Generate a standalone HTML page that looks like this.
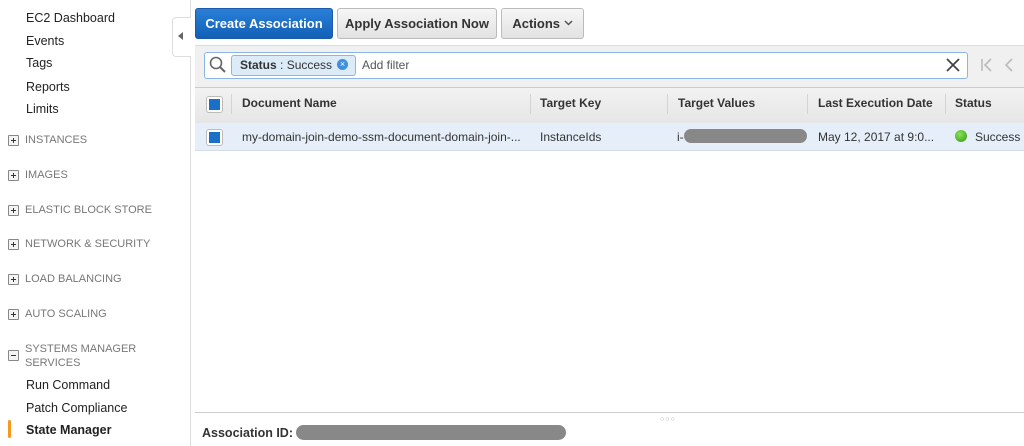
<!DOCTYPE html><html><head><style>
body{margin:0;width:1024px;height:446px;overflow:hidden;background:#fff;font-family:"Liberation Sans",sans-serif;position:relative;font-size:12px;color:#333}
.a{position:absolute;white-space:nowrap}
.nav{left:26px;font-size:12.5px;color:#222}
.sec{left:25px;font-size:11px;color:#777}
.pl{position:absolute;left:8px;width:9px;height:9px;border:1px solid #888;border-radius:1px;background:#f4f4f4}
.pl:before{content:"";position:absolute;left:2px;top:4px;width:5px;height:1px;background:#333}
.pl.p:after{content:"";position:absolute;left:4px;top:2px;width:1px;height:5px;background:#333}
.btn{position:absolute;top:8px;height:29px;border:1px solid #bbb;border-radius:3px;background:linear-gradient(#f6f6f6,#e2e2e2);font-weight:bold;font-size:13px;color:#333;line-height:29px;text-align:center}
.hd{position:absolute;top:87px;height:35px;line-height:33px;font-weight:bold;font-size:12px;color:#333}
.sep{position:absolute;top:94px;width:1px;height:20px;background:#d4d4d4}
.cb{position:absolute;width:11px;height:11px;background:#1a6fc9;border:2px solid #fff;box-shadow:0 0 0 1px #bbb;border-radius:2px}
.blur{position:absolute;background:#888;border-radius:8px}
</style></head><body>
<div class="a" style="left:190px;top:0;width:1px;height:446px;background:#ddd"></div>
<div class="a" style="left:172px;top:17px;width:18px;height:38px;border:1px solid #ddd;border-right:none;border-radius:4px 0 0 4px;background:#fff"></div>
<div class="a" style="left:178px;top:32px;width:0;height:0;border-top:4px solid transparent;border-bottom:4px solid transparent;border-right:5px solid #666"></div>
<div class="a nav" style="top:11px">EC2 Dashboard</div>
<div class="a nav" style="top:34px">Events</div>
<div class="a nav" style="top:56px">Tags</div>
<div class="a nav" style="top:80px">Reports</div>
<div class="a nav" style="top:102px">Limits</div>
<div class="pl p" style="top:135px"></div><div class="a sec" style="top:134px">INSTANCES</div>
<div class="pl p" style="top:170px"></div><div class="a sec" style="top:169px">IMAGES</div>
<div class="pl p" style="top:205px"></div><div class="a sec" style="top:204px">ELASTIC BLOCK STORE</div>
<div class="pl p" style="top:239px"></div><div class="a sec" style="top:238px">NETWORK &amp; SECURITY</div>
<div class="pl p" style="top:274px"></div><div class="a sec" style="top:273px">LOAD BALANCING</div>
<div class="pl p" style="top:309px"></div><div class="a sec" style="top:308px">AUTO SCALING</div>
<div class="pl" style="top:350px"></div><div class="a sec" style="top:342px;line-height:14px">SYSTEMS MANAGER<br>SERVICES</div>
<div class="a nav" style="top:378px">Run Command</div>
<div class="a nav" style="top:401px">Patch Compliance</div>
<div class="a" style="left:8px;top:420px;width:3px;height:18px;background:#f7981d;border-radius:2px"></div>
<div class="a nav" style="top:423px;font-weight:bold">State Manager</div>

<div class="btn" style="left:195px;width:136px;background:linear-gradient(#2a7fd6,#1260b8);border-color:#1a5aa8;color:#fff">Create Association</div>
<div class="btn" style="left:337px;width:158px">Apply Association Now</div>
<div class="btn" style="left:501px;width:81px">Actions <svg width="9" height="6" style="vertical-align:2px"><path d="M1 1l3.5 3.5L8 1" fill="none" stroke="#555" stroke-width="1.5"/></svg></div>

<div class="a" style="left:195px;top:45px;width:829px;height:42px;background:#f0f0f0;border-top:1px solid #ddd"></div>
<div class="a" style="left:204px;top:52px;width:762px;height:25px;background:#fff;border:1px solid #8ab6e3;border-radius:3px"></div>
<svg class="a" style="left:209px;top:56px" width="18" height="18"><circle cx="7" cy="7" r="5.5" fill="none" stroke="#666" stroke-width="1.6"/><path d="M11 11l5 5" stroke="#666" stroke-width="2"/></svg>
<div class="a" style="left:231px;top:55px;width:123px;height:19px;background:#dcebf8;border:1px solid #8ab6e3;border-radius:3px"></div>
<div class="a" style="left:240px;top:58px;font-size:12px"><b>Status</b> : Success</div>
<div class="a" style="left:337px;top:59px;width:11px;height:11px;border-radius:6px;background:#3f8fe0;color:#fff;font-size:9px;line-height:11px;text-align:center">×</div>
<div class="a" style="left:362px;top:58px;color:#555">Add filter</div>
<svg class="a" style="left:946px;top:58px" width="14" height="14"><path d="M1 1l12 12M13 1L1 13" stroke="#444" stroke-width="1.8"/></svg>
<svg class="a" style="left:980px;top:58px" width="36" height="14"><path d="M2 1v12M11 1L5 7l6 6M32 1l-6 6 6 6" fill="none" stroke="#bbb" stroke-width="1.6"/></svg>

<div class="a" style="left:195px;top:87px;width:829px;height:35px;background:linear-gradient(#f2f2f2,#e6e6e6);border-top:1px solid #ccc;border-bottom:1px solid #ccc"></div>
<div class="cb" style="left:207px;top:97px"></div>
<div class="sep" style="left:231px"></div><div class="hd" style="left:242px">Document Name</div>
<div class="sep" style="left:530px"></div><div class="hd" style="left:540px">Target Key</div>
<div class="sep" style="left:667px"></div><div class="hd" style="left:678px">Target Values</div>
<div class="sep" style="left:807px"></div><div class="hd" style="left:818px">Last Execution Date</div>
<div class="sep" style="left:945px"></div><div class="hd" style="left:955px">Status</div>

<div class="a" style="left:195px;top:123px;width:829px;height:27px;background:#e6eff9;border-bottom:1px solid #d4dce6"></div>
<div class="cb" style="left:207px;top:130px"></div>
<div class="a" style="left:242px;top:130px">my-domain-join-demo-ssm-document-domain-join-...</div>
<div class="a" style="left:540px;top:130px">InstanceIds</div>
<div class="a" style="left:677px;top:130px">i-</div>
<div class="blur" style="left:684px;top:129px;width:123px;height:14px"></div>
<div class="a" style="left:818px;top:130px">May 12, 2017 at 9:0...</div>
<div class="a" style="left:955px;top:130px;width:12px;height:12px;border-radius:6px;background:radial-gradient(circle at 40% 35%,#8fe05a,#2f9a10)"></div>
<div class="a" style="left:975px;top:130px">Success</div>

<div class="a" style="left:195px;top:412px;width:829px;height:1px;background:#ccc"></div>
<div class="a" style="left:660px;top:416px;font-size:7px;color:#aaa;letter-spacing:1px">○○○</div>
<div class="a" style="left:202px;top:426px;font-weight:bold;font-size:12.5px">Association ID:</div>
<div class="blur" style="left:296px;top:425px;width:270px;height:15px"></div>
</body></html>
